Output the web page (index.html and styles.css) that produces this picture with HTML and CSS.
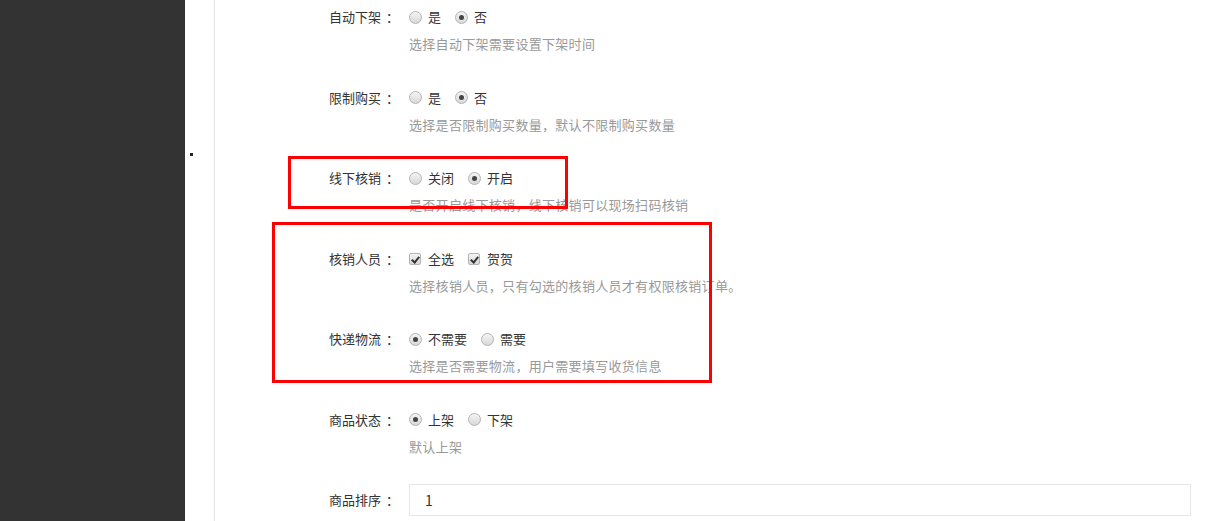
FILE: index.html
```html
<!DOCTYPE html>
<html lang="zh-CN">

<head>
    <meta charset="UTF-8">
    <title>商品设置</title>
    <link rel="stylesheet" href="styles.css">
</head>

<body>
    <div class="sidebar"></div>
    <div class="gap"><span class="dot"></span></div>
    <div class="main">
        <div class="formGroup">
            <label class="formLabel">自动下架<span class="colon">：</span></label>
            <div class="formBody">
                <div class="choices">
                    <span class="choice"><span class="radio"></span>是</span>
                    <span class="choice"><span class="radio on"></span>否</span>
                </div>
                <p class="help">选择自动下架需要设置下架时间</p>
            </div>
        </div>
        <div class="formGroup">
            <label class="formLabel">限制购买<span class="colon">：</span></label>
            <div class="formBody">
                <div class="choices">
                    <span class="choice"><span class="radio"></span>是</span>
                    <span class="choice"><span class="radio on"></span>否</span>
                </div>
                <p class="help">选择是否限制购买数量，默认不限制购买数量</p>
            </div>
        </div>
        <div class="formGroup">
            <label class="formLabel">线下核销<span class="colon">：</span></label>
            <div class="formBody">
                <div class="choices">
                    <span class="choice"><span class="radio"></span>关闭</span>
                    <span class="choice"><span class="radio on"></span>开启</span>
                </div>
                <p class="help">是否开启线下核销，线下核销可以现场扫码核销</p>
            </div>
        </div>
        <div class="formGroup">
            <label class="formLabel">核销人员<span class="colon">：</span></label>
            <div class="formBody">
                <div class="choices">
                    <span class="choice"><span class="check"></span>全选</span>
                    <span class="choice"><span class="check"></span>贺贺</span>
                </div>
                <p class="help">选择核销人员，只有勾选的核销人员才有权限核销订单。</p>
            </div>
        </div>
        <div class="formGroup">
            <label class="formLabel">快递物流<span class="colon">：</span></label>
            <div class="formBody">
                <div class="choices">
                    <span class="choice"><span class="radio on"></span>不需要</span>
                    <span class="choice"><span class="radio"></span>需要</span>
                </div>
                <p class="help">选择是否需要物流，用户需要填写收货信息</p>
            </div>
        </div>
        <div class="formGroup">
            <label class="formLabel">商品状态<span class="colon">：</span></label>
            <div class="formBody">
                <div class="choices">
                    <span class="choice"><span class="radio on"></span>上架</span>
                    <span class="choice"><span class="radio"></span>下架</span>
                </div>
                <p class="help">默认上架</p>
            </div>
        </div>
        <div class="formGroup inputGroup">
            <label class="formLabel">商品排序<span class="colon">：</span></label>
            <div class="formBody">
                <input class="textInput" value="1">
            </div>
        </div>
    </div>

    <div class="markBox markOne"></div>
    <div class="markBox markTwo"></div>
</body>

</html>
```

FILE: styles.css
```css
body {
    margin: 0;
    padding: 0;
    display: flex;
    height: 521px;
    overflow: hidden;
    position: relative;
    background-color: #fff;
    font-family: "Microsoft YaHei", "Noto Sans CJK SC", sans-serif;
    font-size: 13px;
    color: #333;
    text-spacing-trim: space-all;
}

.sidebar {
    width: 185px;
    flex-shrink: 0;
    background-color: #333;
}

.gap {
    width: 29px;
    flex-shrink: 0;
    position: relative;
}

.dot {
    position: absolute;
    left: 5px;
    top: 153px;
    width: 3px;
    height: 3px;
    background-color: #222;
}

.main {
    flex: 1;
    border-left: 1px solid #e2e2e2;
    padding: 7px 29px 0 0;
}

.formGroup {
    display: flex;
    height: 47px;
    margin-bottom: 33.5px;
}

.formLabel {
    width: 184px;
    flex-shrink: 0;
    padding-right: 10px;
    text-align: right;
    line-height: 20px;
    color: #333;
}

.colon {
    padding-left: 5px;
}

.formBody {
    flex: 1;
}

.choices {
    display: flex;
    align-items: center;
    height: 20px;
    line-height: 20px;
}

.choice {
    display: flex;
    align-items: center;
    margin-right: 14px;
    color: #333;
}

.radio {
    width: 11px;
    height: 11px;
    border: 1px solid #b4b4b4;
    border-radius: 50%;
    background: linear-gradient(#f4f4f4, #d8d8d8);
    margin-right: 6px;
    position: relative;
}

.radio.on::after {
    content: "";
    position: absolute;
    left: 3px;
    top: 3px;
    width: 5px;
    height: 5px;
    border-radius: 50%;
    background-color: #444;
}

.check {
    width: 10px;
    height: 10px;
    border: 1px solid #b4b4b4;
    border-radius: 2px;
    background: linear-gradient(#f4f4f4, #d8d8d8);
    margin-right: 7px;
    position: relative;
}

.check::after {
    content: "";
    position: absolute;
    left: 3px;
    top: 1px;
    width: 3px;
    height: 6px;
    border-right: 2px solid #333;
    border-bottom: 2px solid #333;
    transform: rotate(40deg);
}

.help {
    margin: 7px 0 0;
    line-height: 20px;
    color: #999;
    letter-spacing: 0.3px;
}

.inputGroup {
    margin-top: -6.5px;
}

.inputGroup .formLabel {
    line-height: 32px;
}

.textInput {
    width: 100%;
    height: 32px;
    box-sizing: border-box;
    border: 1px solid #e6e6e6;
    padding: 0 15px;
    font-family: inherit;
    font-size: 14px;
    color: #333;
    outline: none;
}

.markBox {
    position: absolute;
    border: 3px solid #f00;
    box-sizing: border-box;
}

.markOne {
    left: 288px;
    top: 156px;
    width: 280px;
    height: 53px;
}

.markTwo {
    left: 272px;
    top: 222px;
    width: 440px;
    height: 161px;
}
```
